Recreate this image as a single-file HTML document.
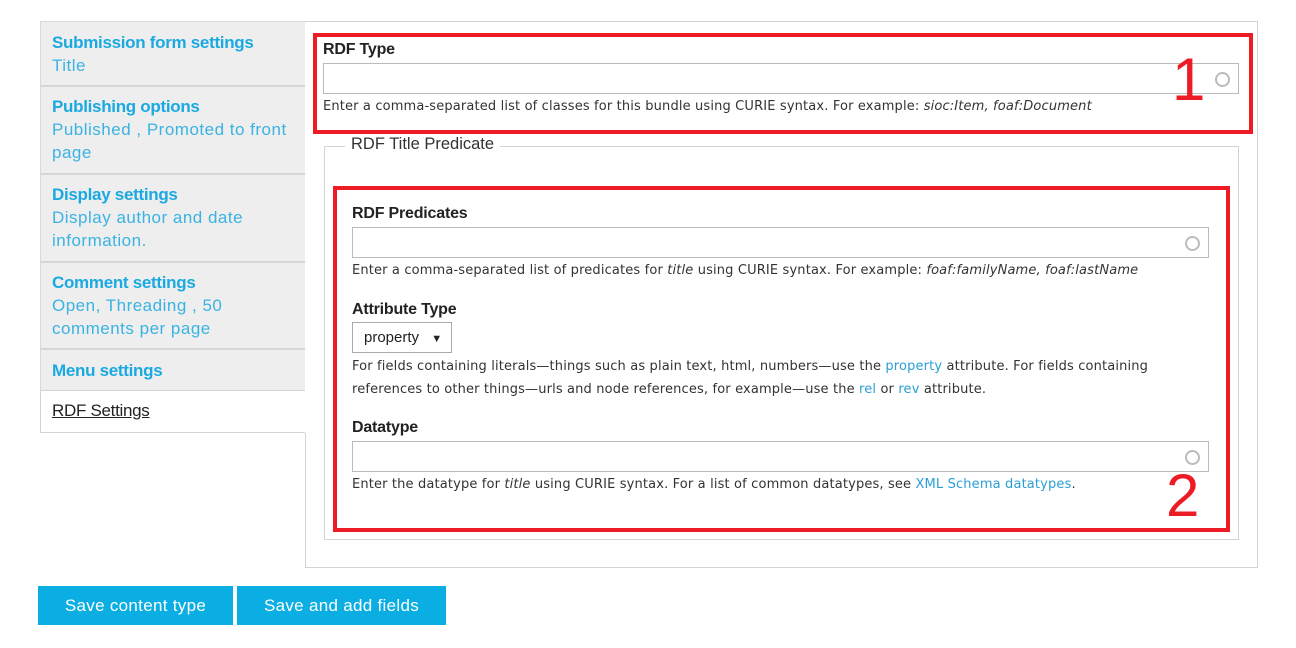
<!DOCTYPE html>
<html><head><meta charset="utf-8"><style>
*{box-sizing:border-box;margin:0;padding:0}
body{width:1296px;height:648px;background:#fff;font-family:"Liberation Sans",sans-serif;position:relative;overflow:hidden;color:#222}
.a{position:absolute}
.side{left:40px;width:266px;background:#eee;border:1px solid #d8d8d8;border-right:none}
.side .t{color:#1ba9e1;font-size:17px;font-weight:bold;letter-spacing:-0.3px;line-height:22px}
.side .d{color:#3ab3e3;font-size:17px;line-height:23px;letter-spacing:0.5px}
.lab{font-size:16px;font-weight:bold;color:#222;letter-spacing:-0.2px}
.inp{border:1px solid #bbb;height:31px;background:#fff}
.inp:after{content:"";position:absolute;right:8px;top:8px;width:11px;height:11px;border:2px solid #bbb;border-radius:50%}
.desc{font-family:"DejaVu Sans",sans-serif;font-size:13px;color:#333;line-height:23px;letter-spacing:0.15px}
.desc a{color:#2a9fd6;text-decoration:none}
.red{border:4px solid #ed1c24}
.btn{background:#0aaee3;color:#fff;font-size:17px;text-align:center;line-height:39px;height:39px;top:586px;letter-spacing:0.3px}
.num{font-size:60px;color:#ed1c24;line-height:60px;font-weight:bold}
</style></head><body>
<div class="a side" style="top:21px;height:65px;border-bottom:1px solid #d4d4d4;padding:10px 11px"><div class="t">Submission form settings</div><div class="d">Title</div></div>
<div class="a side" style="top:86px;height:88px;border-bottom:1px solid #d4d4d4;padding:9px 11px"><div class="t">Publishing options</div><div class="d">Published , Promoted to front page</div></div>
<div class="a side" style="top:174px;height:88px;border-bottom:1px solid #d4d4d4;padding:9px 11px"><div class="t">Display settings</div><div class="d">Display author and date information.</div></div>
<div class="a side" style="top:262px;height:87px;border-bottom:1px solid #d4d4d4;padding:9px 11px"><div class="t">Comment settings</div><div class="d">Open, Threading , 50 comments per page</div></div>
<div class="a side" style="top:349px;height:42px;border-bottom:1px solid #d4d4d4;padding:10px 11px"><div class="t">Menu settings</div></div>
<div class="a" style="left:40px;top:391px;width:266px;height:42px;border:1px solid #d4d4d4;border-top:none;border-right:none;background:#fff;padding:10px 11px;font-size:17px;color:#222;text-decoration:underline;letter-spacing:-0.3px">RDF Settings</div>
<div class="a" style="left:305px;top:21px;width:953px;height:547px;border:1px solid #d4d4d4"></div>
<div class="a" style="left:305px;top:22px;width:2px;height:411px;background:#fff"></div>
<div class="a red" style="left:313px;top:33px;width:940px;height:101px"></div>
<div class="a lab" style="left:323px;top:41px">RDF Type</div>
<div class="a inp" style="left:323px;top:63px;width:916px"></div>
<div class="a num" style="left:1172px;top:50px;font-weight:normal">1</div>
<div class="a desc" style="left:323px;top:95px">Enter a comma-separated list of classes for this bundle using CURIE syntax. For example: <i>sioc:Item, foaf:Document</i></div>
<div class="a" style="left:324px;top:146px;width:915px;height:394px;border:1px solid #d4d4d4"></div>
<div class="a" style="left:345px;top:135px;background:#fff;padding:0 6px;font-size:16.5px;color:#333">RDF Title Predicate</div>
<div class="a red" style="left:333px;top:186px;width:897px;height:346px"></div>
<div class="a lab" style="left:352px;top:205px">RDF Predicates</div>
<div class="a inp" style="left:352px;top:227px;width:857px"></div>
<div class="a desc" style="left:352px;top:259px">Enter a comma-separated list of predicates for <i>title</i> using CURIE syntax. For example: <i>foaf:familyName, foaf:lastName</i></div>
<div class="a lab" style="left:352px;top:301px">Attribute Type</div>
<div class="a" style="left:352px;top:322px;width:100px;height:31px;border:1px solid #aaa;font-size:15px;line-height:29px;padding-left:11px">property <span style="font-size:11px;margin-left:8px">▼</span></div>
<div class="a desc" style="left:352px;top:355px;width:860px">For fields containing literals—things such as plain text, html, numbers—use the <a>property</a> attribute. For fields containing references to other things—urls and node references, for example—use the <a>rel</a> or <a>rev</a> attribute.</div>
<div class="a lab" style="left:352px;top:419px">Datatype</div>
<div class="a inp" style="left:352px;top:441px;width:857px"></div>
<div class="a desc" style="left:352px;top:473px">Enter the datatype for <i>title</i> using CURIE syntax. For a list of common datatypes, see <a>XML Schema datatypes</a>.</div>
<div class="a num" style="left:1166px;top:466px;font-weight:normal">2</div>
<div class="a btn" style="left:38px;width:195px">Save content type</div>
<div class="a btn" style="left:237px;width:209px">Save and add fields</div>
</body></html>
